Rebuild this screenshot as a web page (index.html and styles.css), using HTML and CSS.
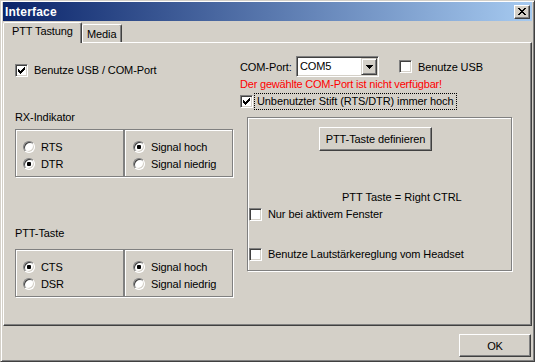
FILE: index.html
```html
<!DOCTYPE html>
<html>
<head>
<meta charset="utf-8">
<link rel="stylesheet" href="styles.css">
</head>
<body>
<div class="window">
  <div class="titlebar">
    <span class="title">Interface</span>
    <span class="close"><svg width="8" height="7" viewBox="0 0 8 7" shape-rendering="crispEdges"><path d="M0 0h2v1H0z M6 0h2v1H6z M1 1h2v1H1z M5 1h2v1H5z M2 2h4v1H2z M3 3h2v1H3z M2 4h4v1H2z M1 5h2v1H1z M5 5h2v1H5z M0 6h2v1H0z M6 6h2v1H6z"/></svg></span>
  </div>
  <div class="tabs">
    <div class="tab active">PTT Tastung</div>
    <div class="tab media">Media</div>
  </div>
  <div class="panel">
    <div class="col-left">
      <div class="cbrow first"><span class="cb"><svg class="chk" width="7" height="7" viewBox="0 0 7 7" shape-rendering="crispEdges"><path d="M0 2h1v3H0z M1 3h1v3H1z M2 4h1v3H2z M3 3h1v3H3z M4 2h1v3H4z M5 1h1v3H5z M6 0h1v3H6z"/></svg></span><span>Benutze USB / COM-Port</span></div>
      <div class="label rx">RX-Indikator</div>
      <div class="pair pair-rx">
        <div class="grp l">
          <div class="opt"><span class="radio"></span><span>RTS</span></div>
          <div class="opt"><span class="radio on"></span><span>DTR</span></div>
        </div>
        <div class="grp r">
          <div class="opt"><span class="radio on"></span><span>Signal hoch</span></div>
          <div class="opt"><span class="radio"></span><span>Signal niedrig</span></div>
        </div>
      </div>
      <div class="label ptt">PTT-Taste</div>
      <div class="pair pair-ptt">
        <div class="grp l">
          <div class="opt"><span class="radio on"></span><span>CTS</span></div>
          <div class="opt"><span class="radio"></span><span>DSR</span></div>
        </div>
        <div class="grp r">
          <div class="opt"><span class="radio on"></span><span>Signal hoch</span></div>
          <div class="opt"><span class="radio"></span><span>Signal niedrig</span></div>
        </div>
      </div>
    </div>
    <div class="col-right">
      <div class="row1">
        <span class="lbl-com">COM-Port:</span>
        <div class="combo">
          <span class="combo-text">COM5</span>
          <span class="dd"><svg width="7" height="4" viewBox="0 0 7 4" shape-rendering="crispEdges"><path d="M0 0h7v1H0z M1 1h5v1H1z M2 2h3v1H2z M3 3h1v1H3z"/></svg></span>
        </div>
        <span class="cb usb"></span><span class="usb-text">Benutze USB</span>
      </div>
      <div class="warn">Der gewählte COM-Port ist nicht verfügbar!</div>
      <div class="cbrow focusrow"><span class="cb"><svg class="chk" width="7" height="7" viewBox="0 0 7 7" shape-rendering="crispEdges"><path d="M0 2h1v3H0z M1 3h1v3H1z M2 4h1v3H2z M3 3h1v3H3z M4 2h1v3H4z M5 1h1v3H5z M6 0h1v3H6z"/></svg></span><span class="focus">Unbenutzter Stift (RTS/DTR) immer hoch</span></div>
      <div class="box">
        <div class="btn def">PTT-Taste definieren</div>
        <div class="assign">PTT Taste = Right CTRL</div>
        <div class="cbrow active-only"><span class="cb"></span><span>Nur bei aktivem Fenster</span></div>
        <div class="cbrow headset"><span class="cb"></span><span>Benutze Lautstärkereglung vom Headset</span></div>
      </div>
    </div>
  </div>
  <div class="footer">
    <div class="btn ok">OK</div>
  </div>
</div>
</body>
</html>
```
FILE: styles.css
```css
* { box-sizing: border-box; }
html, body { margin: 0; padding: 0; }
body {
  background: #D4D0C8;
  font-family: "Liberation Sans", Arial, sans-serif;
  font-size: 11px;
  letter-spacing: -0.1px;
  color: #000;
}
.window {
  width: 535px;
  height: 362px;
  border: 1px solid;
  border-color: #D4D0C8 #404040 #404040 #D4D0C8;
  box-shadow: inset 1px 1px #fff, inset -1px -1px #808080;
  padding: 1px 2px 1px 2px;
  display: flex;
  flex-direction: column;
  background: #D4D0C8;
}
.titlebar {
  height: 19px;
  flex: none;
  display: flex;
  align-items: center;
  justify-content: space-between;
  background: linear-gradient(to right, #0A246A, #A6CAF0);
  color: #fff;
  padding: 0 2px 0 2px;
}
.title {
  font-weight: bold;
  font-size: 12px;
  letter-spacing: 0.2px;
  line-height: 19px;
  padding-top: 1px;
}
.close {
  width: 16px;
  height: 14px;
  background: #D4D0C8;
  border: 1px solid;
  border-color: #fff #404040 #404040 #fff;
  box-shadow: inset -1px -1px #808080;
  display: flex;
  align-items: center;
  justify-content: center;
  padding-right: 1px;
}
.close svg { fill: #000; display: block; }

.tabs {
  flex: none;
  display: flex;
  align-items: flex-end;
  height: 20px;
  margin-top: 1px;
  position: relative;
  z-index: 1;
}
.tab {
  border: 1px solid;
  border-bottom: none;
  border-color: #fff #404040 transparent #fff;
  box-shadow: inset -1px 0 #808080;
  border-radius: 2px 2px 0 0;
  background: #D4D0C8;
  line-height: 13px;
}
.tab.active {
  width: 79px;
  height: 21px;
  margin-bottom: -1px;
  padding: 2px 0 0 8px;
}
.tab.media {
  width: 40px;
  height: 18px;
  padding: 3px 0 0 4px;
}

.panel {
  flex: none;
  height: 284px;
  border: 1px solid;
  border-color: #fff #404040 #404040 #fff;
  box-shadow: inset -1px -1px #808080;
  display: flex;
  align-items: flex-start;
}
.col-left {
  margin-left: 11px;
  width: 218px;
}
.col-right {
  margin-left: 7px;
}

.cbrow {
  display: flex;
  align-items: center;
  gap: 6px;
  line-height: 13px;
  white-space: nowrap;
}
.cbrow.first { margin-top: 21px; }

.cb {
  flex: none;
  width: 13px;
  height: 13px;
  background: #fff;
  border: 1px solid;
  border-color: #808080 #fff #fff #808080;
  box-shadow: inset 1px 1px #404040, inset -1px -1px #D4D0C8;
  display: flex;
  align-items: center;
  justify-content: center;
}
.chk { display: block; fill: #000; }

.label { line-height: 13px; }
.label.rx { margin-top: 34px; }
.label.ptt { margin-top: 50px; }

.pair { display: flex; }
.pair-rx { margin-top: 5px; }
.pair-ptt { margin-top: 9px; }

.grp {
  width: 109px;
  height: 48px;
  border: 1px solid #808080;
  box-shadow: inset 1px 1px #fff, 1px 1px #fff;
  padding: 11px 0 0 7px;
  display: flex;
  flex-direction: column;
  gap: 5px;
}
.grp.r { padding-left: 8px; }

.opt {
  display: flex;
  align-items: center;
  gap: 6px;
  height: 12px;
  line-height: 12px;
  white-space: nowrap;
}
.radio {
  flex: none;
  width: 12px;
  height: 12px;
  border-radius: 50%;
  background: #fff;
  border: 1px solid;
  border-color: #808080 #fff #fff #808080;
  box-shadow: inset 1px 1px #404040, inset -1px -1px #D4D0C8;
  display: flex;
  align-items: center;
  justify-content: center;
}
.radio.on::after {
  content: "";
  width: 4px;
  height: 4px;
  border-radius: 1px;
  background: #000;
}

.row1 {
  display: flex;
  align-items: center;
  height: 21px;
  margin-top: 13px;
  white-space: nowrap;
}
.lbl-com { width: 56px; }
.combo {
  width: 83px;
  height: 21px;
  background: #fff;
  border: 1px solid;
  border-color: #808080 #fff #fff #808080;
  box-shadow: inset 1px 1px #404040, inset -1px -1px #D4D0C8;
  padding: 1px;
  display: flex;
}
.combo-text {
  flex: 1;
  line-height: 17px;
  padding-left: 2px;
}
.dd {
  width: 16px;
  height: 17px;
  background: #D4D0C8;
  border: 1px solid;
  border-color: #D4D0C8 #404040 #404040 #D4D0C8;
  box-shadow: inset 1px 1px #fff, inset -1px -1px #808080;
  display: flex;
  align-items: center;
  justify-content: center;
}
.dd svg { display: block; fill: #000; }
.cb.usb { margin-left: 20px; }
.usb-text { margin-left: 6px; }

.warn {
  margin-top: 1px;
  line-height: 13px;
  color: #ff0000;
  white-space: nowrap;
  letter-spacing: -0.2px;
}
.focusrow {
  margin-top: 2px;
  height: 17px;
  gap: 1px;
}
.focus {
  border: 1px dotted #000;
  padding: 1px 2px;
  line-height: 13px;
}

.box {
  margin: 7px 0 0 7px;
  width: 265px;
  height: 154px;
  border: 1px solid #808080;
  box-shadow: inset 1px 1px #fff, 1px 1px #fff;
}
.btn {
  background: #D4D0C8;
  border: 1px solid;
  border-color: #fff #404040 #404040 #fff;
  box-shadow: inset -1px -1px #808080;
  display: flex;
  align-items: center;
  justify-content: center;
  white-space: nowrap;
}
.btn.def {
  margin: 9px 0 0 71px;
  width: 113px;
  height: 24px;
  padding-bottom: 1px;
}
.assign {
  margin: 40px 0 0 94px;
  line-height: 13px;
  white-space: nowrap;
  letter-spacing: 0;
}
.cbrow.active-only { margin: 4px 0 0 1px; }
.cbrow.headset { margin: 27px 0 0 1px; }

.footer {
  flex: 1;
  display: flex;
  justify-content: flex-end;
  align-items: flex-start;
  padding-top: 8px;
}
.btn.ok {
  width: 72px;
  height: 23px;
  margin-right: 1px;
}
```
